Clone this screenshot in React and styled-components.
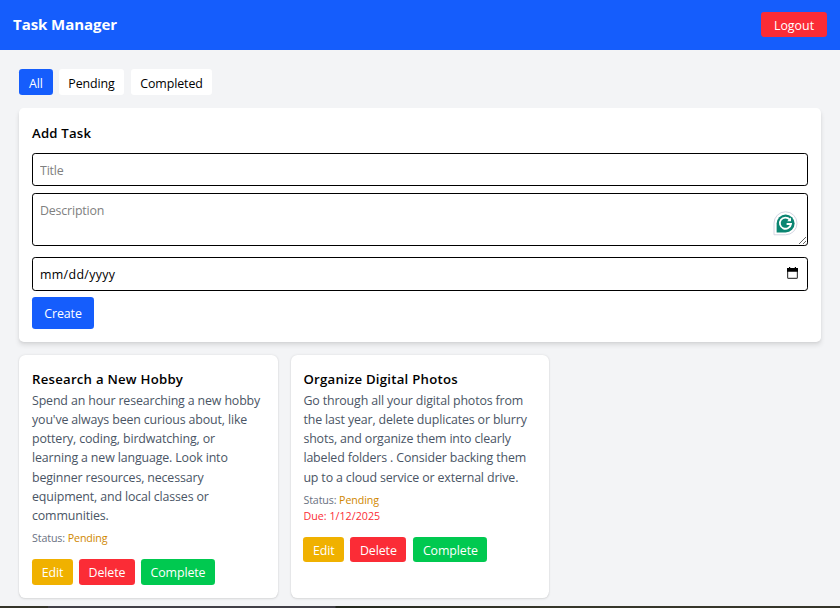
import React from 'react';
import styled, { createGlobalStyle } from 'styled-components';

const Global = createGlobalStyle`
  *, *::before, *::after { box-sizing: border-box; }
  body {
    margin: 0;
    overflow: hidden;
    background: #f3f4f6;
    color: #000;
    font: 400 12.4px/19.2px "Open Sans", "Noto Sans", sans-serif;
    letter-spacing: -0.14px;
  }
  h1, h2, h3, p { margin: 0; }
  button, input, textarea { font: inherit; letter-spacing: inherit; }
`;

const Page = styled.div`
  height: 608px;
  display: flex;
  flex-direction: column;
`;

const Header = styled.header`
  height: 50px;
  flex: none;
  display: flex;
  align-items: flex-start;
  justify-content: space-between;
  padding: 12px 13px 0 13px;
  background: #155dfc;
  color: #fff;
`;

const Brand = styled.h1`
  font-size: 15px;
  line-height: 24px;
  font-weight: 700;
  letter-spacing: -0.06px;
`;

const Button = styled.button`
  flex: none;
  width: ${(p) => p.$w}px;
  height: ${(p) => p.$h || 26}px;
  padding: 0 0 ${(p) => p.$pb || 0}px;
  border: 0;
  border-radius: 3.2px;
  background: ${(p) => p.$bg};
  color: ${(p) => p.$color || '#fff'};
  line-height: 19px;
  text-align: center;
  white-space: nowrap;
  letter-spacing: ${(p) => p.$ls ?? -0.1}px;
  padding-top: ${(p) => p.$pt ?? 2}px;
`;

const Main = styled.main`
  flex: 1;
  padding: 19px 19px 0;
`;

const Filters = styled.div`
  display: flex;
  gap: 6px;
  margin-bottom: 13px;
`;

const FilterButton = styled(Button)`
  margin-right: ${(p) => p.$gap || 0}px;
`;

const Form = styled.form`
  display: flex;
  flex-direction: column;
  height: 234px;
  padding: 15px 13px 0;
  margin-bottom: 13px;
  border-radius: 4.8px;
  background: #fff;
  box-shadow: 0 3.2px 4.8px -0.8px rgba(0, 0, 0, 0.1), 0 1.6px 3.2px -1.6px rgba(0, 0, 0, 0.1);
`;

const Heading = styled.h2`
  font-size: 13.2px;
  line-height: 20px;
  font-weight: 600;
  letter-spacing: 0.2px;
`;

const FormHeading = styled(Heading)`
  margin-bottom: 10px;
`;

const CardHeading = styled(Heading)`
  line-height: 18px;
  letter-spacing: 0.24px;
`;

const Field = styled.div`
  position: relative;
  display: flex;
  height: ${(p) => p.$h}px;
  margin-bottom: ${(p) => p.$mb}px;
`;

const Input = styled.input`
  width: 100%;
  height: 100%;
  padding: ${(p) => p.$pt ?? 2}px 7px 0;
  border: 1px solid #000;
  border-radius: 3.2px;
  background: #fff;
  outline: 0;
  letter-spacing: ${(p) => p.$ls ?? -0.18}px;
  &::placeholder { color: ${(p) => p.$hint || '#808080'}; opacity: 1; }
`;

const TextArea = styled(Input)`
  resize: none;
  overflow: hidden;
`;

const Overlay = styled.svg`
  position: absolute;
  right: ${(p) => p.$right}px;
  top: ${(p) => p.$top}px;
`;

const Cards = styled.div`
  display: grid;
  grid-template-columns: 259px 258px;
  column-gap: 13px;
`;

const Card = styled.article`
  height: 243px;
  padding: 15px 0 0 ${(p) => p.$pl}px;
  border-radius: 6.4px;
  background: #fff;
  box-shadow: 0 0.8px 2.4px rgba(0, 0, 0, 0.1), 0 0.8px 1.6px -0.8px rgba(0, 0, 0, 0.1);
`;

const Body = styled.p`
  margin-top: 2.8px;
  color: #4a5565;
  white-space: pre-line;
`;

const Meta = styled.p`
  margin-top: ${(p) => p.$mt || 0}px;
  font-size: 10.7px;
  line-height: 16px;
  letter-spacing: ${(p) => p.$ls ?? -0.12}px;
  color: ${(p) => p.$color || '#6a7282'};
`;

const Pending = styled.span`
  color: #d08700;
`;

const Actions = styled.div`
  display: flex;
  gap: 6px;
  margin-top: ${(p) => p.$mt}px;
`;

const Strip = styled.div`
  height: 2px;
  flex: none;
  background: linear-gradient(90deg, #35352a 0 48px, #414047 48px 335px, #24291f 336px, #37372b 560px, #35352a);
`;

const TASKS = [
  {
    title: 'Research a New Hobby',
    text: "Spend an hour researching a new hobby\nyou've always been curious about, like\npottery, coding, birdwatching, or\nlearning a new language. Look into\nbeginner resources, necessary\nequipment, and local classes or\ncommunities.",
    pl: 13, h: 26, pt: 1, gap: 6,
  },
  {
    title: 'Organize Digital Photos',
    text: 'Go through all your digital photos from\nthe last year, delete duplicates or blurry\nshots, and organize them into clearly\nlabeled folders . Consider backing them\nup to a cloud service or external drive.',
    due: '1/12/2025',
    pl: 12.4, h: 25, pt: 2, gap: 7,
  },
];

const CompleteButton = styled(Button)`
  margin-left: ${(p) => p.$gap - 6}px;
`;

function TaskCard({ task }) {
  return (
    <Card $pl={task.pl}>
      <CardHeading as="h3">{task.title}</CardHeading>
      <Body>{task.text}</Body>
      <Meta $mt={5}>Status: <Pending>Pending</Pending></Meta>
      {task.due && <Meta $color="#fb2c36" $ls={0.02}>Due: {task.due}</Meta>}
      <Actions $mt={13}>
        <Button $w={41} $h={task.h} $pt={task.pt} $bg="#f0b100">Edit</Button>
        <Button $w={56} $h={task.h} $pt={task.pt} $bg="#fb2c36">Delete</Button>
        <CompleteButton $w={74} $h={task.h} $pt={task.pt} $gap={task.gap} $bg="#00c950">Complete</CompleteButton>
      </Actions>
    </Card>
  );
}

export default function App() {
  return (
    <Page>
      <Global />
      <Header>
        <Brand>Task Manager</Brand>
        <Button $w={66} $h={25} $bg="#fb2c36" $ls={0}>Logout</Button>
      </Header>
      <Main>
        <Filters>
          <FilterButton $w={34} $bg="#155dfc">All</FilterButton>
          <FilterButton $w={65} $bg="#fff" $color="#000" $gap={1}>Pending</FilterButton>
          <FilterButton $w={81} $bg="#fff" $color="#000">Completed</FilterButton>
        </Filters>
        <Form>
          <FormHeading>Add Task</FormHeading>
          <Field $h={33} $mb={7}>
            <Input placeholder="Title" />
          </Field>
          <Field $h={53} $mb={11}>
            <TextArea as="textarea" placeholder="Description" $pt={7} />
            <Overlay $right={10} $top={18} width="25" height="25" viewBox="0 0 25 25">
              <path d="M1 12.3a11.5 11.5 0 1 1 11.5 11.5H1Z" fill="#fff" stroke="#d3d5e2" />
              <path d="M3.6 12.5a9 9 0 1 1 9 9h-9Z" fill="#0b8572" />
              <path d="M16.8 8.6A5.6 5.6 0 1 0 18 13H13.6" fill="none" stroke="#fff" strokeWidth="1.8" />
              <path d="M18 6.6V10.2H14.2Z" fill="#fff" />
            </Overlay>
            <Overlay $right={1} $top={43} width="9" height="9" viewBox="0 0 9 9">
              <path d="M1 8 8 1M5 8 8 5" fill="none" stroke="#555" strokeWidth="0.9" />
            </Overlay>
          </Field>
          <Field $h={34} $mb={6}>
            <Input placeholder="mm/dd/yyyy" $hint="#000" $ls={0.34} $pt={0} />
            <Overlay $right={10} $top={10} width="11" height="12" viewBox="0 0 11 12">
              <path d="M.6 2h9.8v8.6a.8.8 0 0 1-.8.8H1.4a.8.8 0 0 1-.8-.8Z" fill="none" stroke="#444" strokeWidth="1.2" />
              <path d="M0 1h11v3.8H0ZM2 0h1.2v2H2ZM7.8 0H9v2H7.8Z" fill="#000" />
            </Overlay>
          </Field>
          <Button type="button" $w={62} $h={32} $pt={1} $bg="#155dfc">Create</Button>
        </Form>
        <Cards>
          {TASKS.map((t) => <TaskCard key={t.title} task={t} />)}
        </Cards>
      </Main>
      <Strip />
    </Page>
  );
}
